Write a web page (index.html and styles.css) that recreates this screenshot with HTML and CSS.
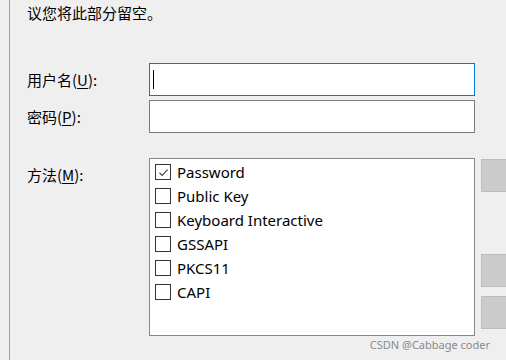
FILE: index.html
```html
<!DOCTYPE html>
<html lang="zh-CN">
<head>
    <meta charset="UTF-8">
    <title>登录设置</title>
    <link rel="stylesheet" href="styles.css">
</head>
<body>
    <div class="panel">
        <div class="note">议您将此部分留空。</div>

        <div class="form-row first">
            <div class="label">用户名(<u>U</u>):</div>
            <div class="field focused"><span class="caret"></span></div>
        </div>
        <div class="form-row">
            <div class="label">密码(<u>P</u>):</div>
            <div class="field"></div>
        </div>

        <div class="method-row">
            <div class="label top">方法(<u>M</u>):</div>
            <div class="method-list">
                <div class="method-item"><span class="checkbox checked">
                    <svg width="13" height="13" viewBox="0 0 13 13"><path d="M2.5 6.8 L5.2 9.4 L10.6 3.6" fill="none" stroke="#4a4a4a" stroke-width="1.3"/></svg>
                </span>Password</div>
                <div class="method-item"><span class="checkbox"></span>Public Key</div>
                <div class="method-item"><span class="checkbox"></span>Keyboard Interactive</div>
                <div class="method-item"><span class="checkbox"></span>GSSAPI</div>
                <div class="method-item"><span class="checkbox"></span>PKCS11</div>
                <div class="method-item"><span class="checkbox"></span>CAPI</div>
            </div>
            <div class="side-buttons">
                <div class="side-button"></div>
                <div class="side-button lower"></div>
                <div class="side-button"></div>
            </div>
        </div>
    </div>
    <div class="watermark">CSDN @Cabbage coder</div>
</body>
</html>
```

FILE: styles.css
```css
body {
    margin: 0;
    width: 506px;
    height: 360px;
    overflow: hidden;
    background-color: #efefef;
    font-family: "Noto Sans CJK SC", "Noto Sans", sans-serif;
    color: #000;
    position: relative;
}

.panel {
    margin-left: 9px;
    height: 360px;
    border-left: 1px solid #a0a0a0;
    padding-left: 17px;
}

.note {
    font-size: 15px;
    line-height: 20px;
    padding-top: 3px;
}

.form-row {
    display: flex;
    align-items: center;
    margin-top: 4px;
}

.form-row.first {
    margin-top: 40px;
}

.label {
    flex-shrink: 0;
    width: 122px;
    font-size: 15px;
    line-height: 20px;
    color: #000;
}

.label u {
    text-underline-offset: 2px;
}

.label.top {
    padding-top: 7px;
}

.field {
    flex-shrink: 0;
    box-sizing: border-box;
    width: 326px;
    height: 33px;
    background-color: #fff;
    border: 1px solid #7a7a7a;
    display: flex;
    align-items: center;
    padding-left: 3px;
}

.field.focused {
    border-color: #0078d7;
}

.caret {
    width: 1px;
    height: 19px;
    background-color: #000;
}

.method-row {
    display: flex;
    align-items: flex-start;
    margin-top: 25px;
}

.method-list {
    flex-shrink: 0;
    box-sizing: border-box;
    width: 326px;
    height: 178px;
    background-color: #fff;
    border: 1px solid #828790;
    padding: 1px 0 0 5px;
}

.method-item {
    display: flex;
    align-items: center;
    height: 24px;
    font-family: "Noto Sans", sans-serif;
    font-size: 15px;
}

.checkbox {
    box-sizing: border-box;
    width: 16px;
    height: 16px;
    border: 1px solid #333;
    background-color: #fff;
    margin-right: 6px;
    display: flex;
    align-items: center;
    justify-content: center;
}

.side-buttons {
    flex-shrink: 0;
    display: flex;
    flex-direction: column;
    margin-left: 6px;
    padding-top: 1px;
}

.side-button {
    box-sizing: border-box;
    width: 40px;
    height: 33px;
    background-color: #cccccc;
    border: 1px solid #bdbdbd;
    margin-bottom: 9px;
}

.side-button.lower {
    margin-top: 53px;
}

.watermark {
    position: absolute;
    right: 16px;
    bottom: 8px;
    font-family: "Noto Sans", sans-serif;
    font-size: 11px;
    color: #8a8a8a;
}
```
